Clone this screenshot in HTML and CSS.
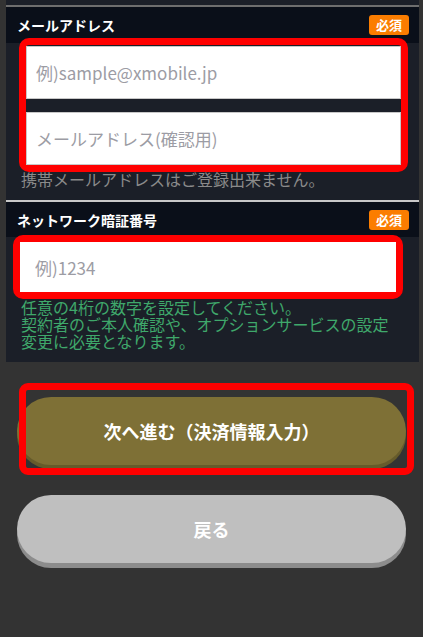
FILE: index.html
```html
<!DOCTYPE html>
<html lang="ja">
<head>
    <meta charset="UTF-8">
    <meta name="viewport" content="width=device-width, initial-scale=1.0">
    <title>お客様情報入力</title>
    <link rel="stylesheet" href="styles.css">
</head>
<body>
    <div class="form-panel">
        <!-- メールアドレス -->
        <div class="field-head field-head-first">
            <span class="field-label">メールアドレス</span>
            <span class="badge">必須</span>
        </div>
        <div class="field-body field-body-mail">
            <div class="marked marked-mail">
                <input type="email" class="text-input" placeholder="例)sample@xmobile.jp">
                <input type="email" class="text-input" placeholder="メールアドレス(確認用)">
            </div>
            <p class="note">携帯メールアドレスはご登録出来ません。</p>
        </div>

        <!-- ネットワーク暗証番号 -->
        <div class="field-head field-head-second">
            <span class="field-label">ネットワーク暗証番号</span>
            <span class="badge">必須</span>
        </div>
        <div class="field-body field-body-pin">
            <div class="marked marked-pin">
                <input type="tel" class="text-input text-input-pin" placeholder="例)1234">
            </div>
            <p class="hint">任意の4桁の数字を設定してください。</p>
            <p class="hint">契約者のご本人確認や、オプションサービスの設定変更に必要となります。</p>
        </div>
    </div>

    <div class="actions">
        <div class="next-wrap">
            <button class="pill-button pill-next">次へ進む（決済情報入力）</button>
        </div>
        <button class="pill-button pill-back">戻る</button>
    </div>
</body>
</html>
```

FILE: styles.css
```css
body {
    margin: 0;
    background: #333333;
    font-family: "Noto Sans CJK JP", "Noto Sans", sans-serif;
    height: 637px;
    overflow: hidden;
}
.form-panel {
    margin: 0 4px 0 6px;
    padding-top: 5px;
    background: #1b1f28;
}
.field-head {
    display: flex;
    justify-content: space-between;
    align-items: center;
    height: 36px;
    padding: 0 10px 0 11px;
    background: #0a0f19;
    border-top: 2px solid #6e6e6e;
}
.field-head-second {
    height: 35px;
    border-top-color: #c8c8c8;
}
.field-label {
    color: #ffffff;
    font-size: 14px;
    font-weight: bold;
}
.badge {
    width: 40px;
    height: 20px;
    line-height: 20px;
    text-align: center;
    background: #fb7d00;
    border-radius: 3px;
    color: #ffffff;
    font-size: 13px;
    font-weight: bold;
}
.field-body-mail {
    padding-bottom: 11px;
}
.field-body-pin {
    padding-bottom: 12px;
}
/* red marker frames */
.marked {
    position: relative;
    z-index: 1;
    border: 7px solid #ff0000;
    border-radius: 10px;
}
.marked-mail {
    margin: -5px 11px 0 13px;
    padding-top: 1px;
    display: flex;
    flex-direction: column;
    gap: 13px;
}
.marked-pin {
    margin: -2px 16px 0 7px;
}
.text-input {
    display: block;
    box-sizing: border-box;
    width: 100%;
    height: 53px;
    margin: 0;
    padding: 0 0 0 9px;
    border: 1px solid #c8c8c8;
    border-radius: 0;
    background: #ffffff;
    font-family: "Noto Sans CJK JP", "Noto Sans", sans-serif;
    font-size: 17px;
    color: #333;
}
.text-input-pin {
    height: 50px;
    padding-left: 15px;
    border: none;
}
.text-input::placeholder {
    color: #9c9ca4;
}
.note {
    margin: -3px 0 0 0;
    padding-left: 15px;
    font-size: 16px;
    line-height: 20px;
    color: #8a8a8a;
}
.hint {
    margin: 0;
    padding: 0 20px 0 15px;
    font-size: 16px;
    line-height: 17px;
    color: #3fa86b;
}
.actions {
    padding: 35px 17px 0 17px;
}
.next-wrap {
    position: relative;
    margin-bottom: 30px;
}
.next-wrap::after {
    content: "";
    position: absolute;
    top: -14px;
    left: 2px;
    right: -8px;
    bottom: -10px;
    border: 7px solid #ff0000;
    border-radius: 9px;
    pointer-events: none;
}
.pill-button {
    display: block;
    width: 100%;
    height: 68px;
    border: none;
    border-radius: 34px;
    color: #ffffff;
    font-family: "Noto Sans CJK JP", "Noto Sans", sans-serif;
    font-size: 18px;
    font-weight: bold;
    cursor: pointer;
}
.pill-next {
    background: #7e7036;
    box-shadow: 0 4px 0 #665b2b;
}
.pill-back {
    background: #bfbfbf;
    box-shadow: 0 5px 0 #8c8c8c;
}
```
